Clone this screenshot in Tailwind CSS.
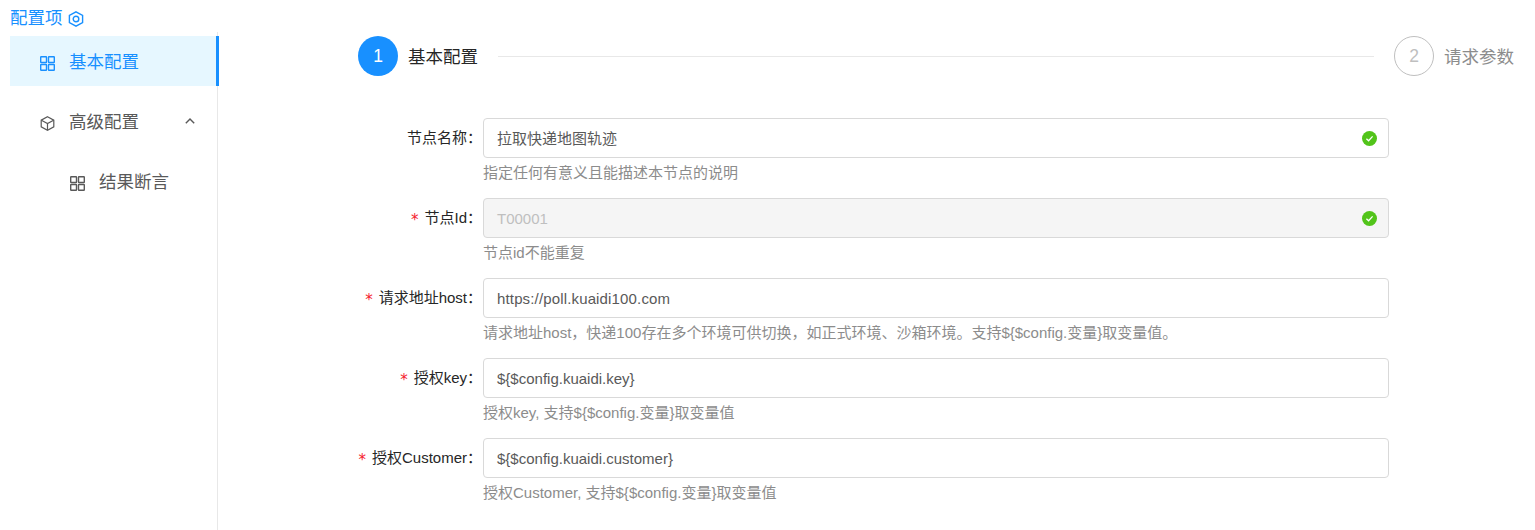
<!DOCTYPE html>
<html lang="zh-CN">
<head>
    <meta charset="UTF-8">
    <meta name="viewport" content="width=device-width, initial-scale=1.0">
    <title>配置项</title>
    <script src="https://cdn.jsdelivr.net/npm/@tailwindcss/browser@4"></script>
</head>
<body class="bg-white h-[530px] overflow-hidden font-['Liberation_Sans','Noto_Sans_CJK_SC',sans-serif]">
    <div class="flex h-[530px]">
        <!-- Sidebar -->
        <div class="w-[219px] shrink-0 pl-[10px]">
            <div class="h-[32px] flex items-start gap-[5px] text-[17.5px] text-[#1890ff] leading-none pt-[10px]">
                <span>配置项</span>
                <svg class="w-[16px] h-[16px] mt-[1px]" viewBox="0 0 16 16" fill="none" stroke="#1890ff" stroke-width="1.4"><path d="M8 0.8 14.6 4.4V11.6L8 15.2 1.4 11.6V4.4Z"/><circle cx="8" cy="8" r="2.8"/></svg>
            </div>
            <div class="border-r border-[#e8e8e8] h-[498px] w-[208px] pt-[4px]">
                <div class="relative w-[209px] h-[50px] bg-[#e6f7ff] flex items-center pl-[30px] text-[#1890ff] text-[17.5px]">
                    <svg class="w-[15px] h-[15px] mr-[14px] mt-[5px]" viewBox="0 0 15 15" fill="none" stroke="#1890ff" stroke-width="1.4"><rect x="0.7" y="0.7" width="5.8" height="5.8" rx="0.5"/><rect x="8.5" y="0.7" width="5.8" height="5.8" rx="0.5"/><rect x="0.7" y="8.5" width="5.8" height="5.8" rx="0.5"/><rect x="8.5" y="8.5" width="5.8" height="5.8" rx="0.5"/></svg>
                    <span class="mt-[3px]">基本配置</span>
                    <div class="absolute right-0 top-0 bottom-0 w-[3px] bg-[#1890ff]"></div>
                </div>
                <div class="mt-[10px] h-[50px] flex items-center pl-[30px] pr-[22px] text-[#595959] text-[17.5px]">
                    <svg class="w-[15px] h-[15px] mr-[14px] mt-[5px]" viewBox="0 0 15 15" fill="none" stroke="#595959" stroke-width="1.2"><path d="M7.5 0.8 13.8 4.2V10.8L7.5 14.2 1.2 10.8V4.2Z"/><path d="M1.4 4.3 7.5 7.6 13.6 4.3M7.5 7.6V14"/></svg>
                    <span class="mt-[3px]">高级配置</span>
                    <svg class="w-[10px] h-[6px] ml-auto mb-[1px]" viewBox="0 0 10 6" fill="none" stroke="#595959" stroke-width="1.4"><path d="M0.8 5.2 5 1 9.2 5.2"/></svg>
                </div>
                <div class="mt-[10px] h-[50px] flex items-center pl-[60px] text-[#595959] text-[17.5px]">
                    <svg class="w-[15px] h-[15px] mr-[14px] mt-[5px]" viewBox="0 0 15 15" fill="none" stroke="#595959" stroke-width="1.4"><rect x="0.7" y="0.7" width="5.8" height="5.8" rx="0.5"/><rect x="8.5" y="0.7" width="5.8" height="5.8" rx="0.5"/><rect x="0.7" y="8.5" width="5.8" height="5.8" rx="0.5"/><rect x="8.5" y="8.5" width="5.8" height="5.8" rx="0.5"/></svg>
                    <span class="mt-[3px]">结果断言</span>
                </div>
            </div>
        </div>

        <!-- Main -->
        <div class="flex-1 pl-[139px] pr-[20px] pt-[36px]">
            <!-- Steps -->
            <div class="flex items-center h-[40px]">
                <div class="w-[40px] h-[40px] rounded-full bg-[#1890ff] text-white flex items-center justify-center text-[17.5px]">1</div>
                <span class="ml-[10px] mt-[2px] text-[17.5px] text-[#262626]">基本配置</span>
                <div class="flex-1 h-px bg-[#e8e8e8] mx-[20px]"></div>
                <div class="w-[40px] h-[40px] rounded-full border border-[#bfbfbf] text-[#bfbfbf] flex items-center justify-center text-[17.5px]">2</div>
                <span class="ml-[10px] mt-[2px] w-[71px] whitespace-nowrap text-[17.5px] text-[#8c8c8c]">请求参数</span>
            </div>

            <!-- Form -->
            <div class="mt-[42px] flex flex-col text-[15px]">
                <div class="flex h-[80px]">
                    <label class="w-[124px] mr-[1px] h-[40px] flex items-center justify-end whitespace-nowrap text-[#262626]">节点名称：</label>
                    <div class="w-[906px]">
                        <div class="h-[40px] border border-[#d9d9d9] rounded-[4px] flex items-center justify-between pl-[13px] pr-[11px] text-[#595959]">
                            <span class="mt-[2px]">拉取快递地图轨迹</span>
                            <svg class="w-[15px] h-[15px]" viewBox="0 0 15 15"><circle cx="7.5" cy="7.5" r="7.5" fill="#52c41a"/><path d="M4.4 7.7 6.6 9.8 10.6 5.4" fill="none" stroke="#fff" stroke-width="1.3"/></svg>
                        </div>
                        <div class="text-[#8c8c8c] h-[28px] pt-[2px] flex items-center">指定任何有意义且能描述本节点的说明</div>
                    </div>
                </div>
                <div class="flex h-[80px]">
                    <label class="w-[124px] mr-[1px] h-[40px] flex items-center justify-end whitespace-nowrap text-[#262626]"><span class="font-['DejaVu_Sans'] text-[#f5222d] mr-[6px] translate-y-[2px]">*</span>节点Id：</label>
                    <div class="w-[906px]">
                        <div class="h-[40px] border border-[#d9d9d9] bg-[#f5f5f5] rounded-[4px] flex items-center justify-between pl-[13px] pr-[11px] text-[#bfbfbf]">
                            <span class="mt-[2px]">T00001</span>
                            <svg class="w-[15px] h-[15px]" viewBox="0 0 15 15"><circle cx="7.5" cy="7.5" r="7.5" fill="#52c41a"/><path d="M4.4 7.7 6.6 9.8 10.6 5.4" fill="none" stroke="#fff" stroke-width="1.3"/></svg>
                        </div>
                        <div class="text-[#8c8c8c] h-[28px] pt-[2px] flex items-center">节点id不能重复</div>
                    </div>
                </div>
                <div class="flex h-[80px]">
                    <label class="w-[124px] mr-[1px] h-[40px] flex items-center justify-end whitespace-nowrap text-[#262626]"><span class="font-['DejaVu_Sans'] text-[#f5222d] mr-[6px] translate-y-[2px]">*</span>请求地址host：</label>
                    <div class="w-[906px]">
                        <div class="h-[40px] border border-[#d9d9d9] rounded-[4px] flex items-center pl-[13px] pr-[11px] pt-[2px] text-[#595959] tracking-[0.15px]">https://poll.kuaidi100.com</div>
                        <div class="text-[#8c8c8c] h-[28px] pt-[2px] flex items-center">请求地址host，快递100存在多个环境可供切换，如正式环境、沙箱环境。支持${$config.变量}取变量值。</div>
                    </div>
                </div>
                <div class="flex h-[80px]">
                    <label class="w-[124px] mr-[1px] h-[40px] flex items-center justify-end whitespace-nowrap text-[#262626]"><span class="font-['DejaVu_Sans'] text-[#f5222d] mr-[6px] translate-y-[2px]">*</span>授权key：</label>
                    <div class="w-[906px]">
                        <div class="h-[40px] border border-[#d9d9d9] rounded-[4px] flex items-center pl-[13px] pr-[11px] pt-[2px] text-[#595959]">${$config.kuaidi.key}</div>
                        <div class="text-[#8c8c8c] h-[28px] pt-[2px] flex items-center">授权key, 支持${$config.变量}取变量值</div>
                    </div>
                </div>
                <div class="flex h-[80px]">
                    <label class="w-[124px] mr-[1px] h-[40px] flex items-center justify-end whitespace-nowrap text-[#262626]"><span class="font-['DejaVu_Sans'] text-[#f5222d] mr-[6px] translate-y-[2px]">*</span>授权Customer：</label>
                    <div class="w-[906px]">
                        <div class="h-[40px] border border-[#d9d9d9] rounded-[4px] flex items-center pl-[13px] pr-[11px] pt-[2px] text-[#595959]">${$config.kuaidi.customer}</div>
                        <div class="text-[#8c8c8c] h-[28px] pt-[2px] flex items-center">授权Customer, 支持${$config.变量}取变量值</div>
                    </div>
                </div>
            </div>
        </div>
    </div>
</body>
</html>
